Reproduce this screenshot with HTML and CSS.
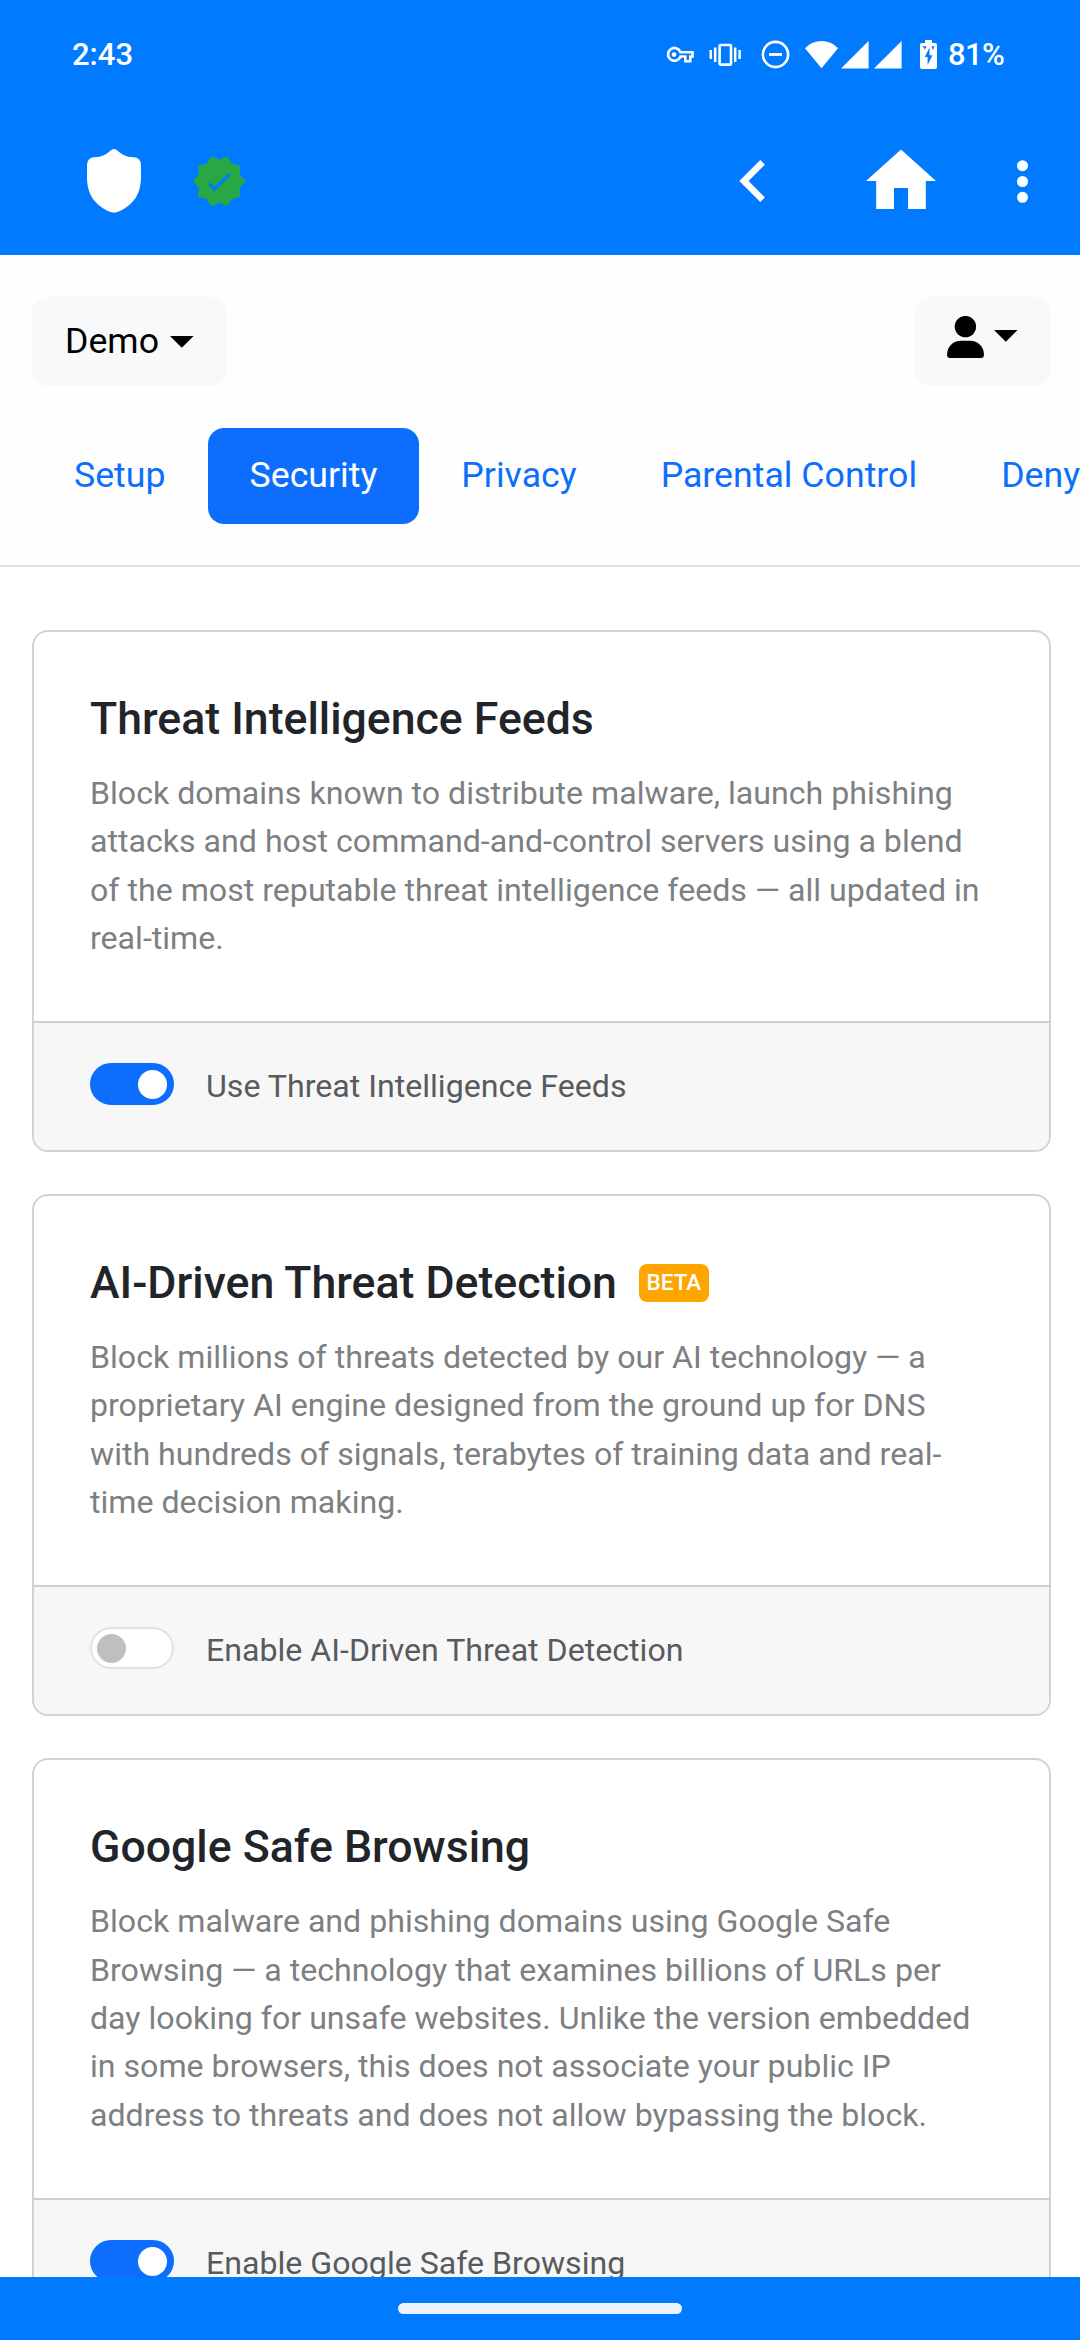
FILE: index.html
```html
<!DOCTYPE html>
<html lang="en">
<head>
<meta charset="utf-8">
<title>Security</title>
<link rel="stylesheet" href="styles.css">
</head>
<body>
<header class="appbar">
  <div class="status">
    <span class="clock">2:43</span>
    <div class="status-icons">
      <svg class="key" viewBox="666 46 29 18" width="29" height="18"><path d="M680.500 52.200h12v4.300h-2.200v4.800h-5v-4.800h-4.800A6.400 6.400 0 1 1 680.500 52.200z" fill="none" stroke="#fff" stroke-width="2.600"/><circle cx="674" cy="54.600" r="2.400" fill="#fff"/></svg>
      <svg class="vibrate" viewBox="709 43 33 24" width="33" height="24"><rect x="719.600" y="45" width="11.400" height="19.600" rx="1" fill="none" stroke="#fff" stroke-width="2.600"/><path d="M710.800 50v9M715.200 47.500v14.500M735.200 47.500v14.500M739.600 50v9" stroke="#fff" stroke-width="2.500"/></svg>
      <svg class="dnd" viewBox="761 40 29 29" width="29" height="29"><circle cx="775.500" cy="54.500" r="12.600" fill="none" stroke="#fff" stroke-width="2.600"/><path d="M769 54.500h13" stroke="#fff" stroke-width="2.800"/></svg>
      <svg class="wifi" viewBox="805 40 33 29" width="33" height="29"><path d="M821.500 68.200L805 48.200Q812 41 821.500 41T838 48.200z" fill="#fff"/></svg>
      <svg class="signal" viewBox="841 40 28 29" width="28" height="29"><path d="M868.600 41v27.500H841z" fill="#fff"/></svg>
      <svg class="signal second" viewBox="841 40 28 29" width="28" height="29"><path d="M868.600 41v27.500H841z" fill="#fff"/></svg>
      <svg class="battery" viewBox="920 40 17 29" width="17" height="29"><path d="M925 40h7v3h3.200q1.800 0 1.800 1.800v22.400q0 1.800-1.800 1.800h-13.400q-1.800 0-1.800-1.800v-22.400q0-1.800 1.800-1.800h3.200z" fill="#fff"/><path d="M929.500 47.500l-4.700 9.500h2.800v8l4.900-9.800h-3zM922.500 46.200h4.200l-1.800 3.200zM931.500 46.200h3l-1.600 4z" fill="#007aff"/></svg>
      <span class="percent">81%</span>
    </div>
  </div>
  <nav class="toolbar">
    <svg class="shield" viewBox="87 149 54 64" width="54" height="64"><path d="M111.500 149.800q2.500-1.600 5 0C122 155 126 157 133.500 157.300Q141 157.500 141 165.500V177C141 193 134.500 205 117.500 212Q114 213.200 110.500 212C93.500 205 87 193 87 177V165.500Q87 157.500 94.500 157.300C102 157 106 155 111.500 149.800z" fill="#fff"/></svg>
    <svg class="verified" viewBox="1 1 22 22" width="52.500" height="52.500"><path d="M23 12l-2.440-2.790.34-3.690-3.610-.82-1.890-3.200L12 2.960 8.600 1.500 6.710 4.690 3.100 5.500l.34 3.700L1 12l2.440 2.790-.34 3.700 3.610.82L8.600 22.500l3.400-1.470 3.400 1.460 1.890-3.190 3.610-.82-.34-3.690L23 12z" fill="#28a745"/><path d="M7.300 13.400l.85-.95L10 14.250l5.900-5.750.95.9L10 16.300z" fill="#007aff"/></svg>
    <svg class="back" viewBox="739 159 27 44" width="27" height="44"><path d="M760.300 160l4.600 4.700L748.600 181l16.300 16.300-4.600 4.700L739.300 181z" fill="#fff"/></svg>
    <svg class="home" viewBox="866 149 70 60" width="70" height="60"><path d="M901 149.500l35 31.500h-10.200v28H908v-21h-14v21h-17.800v-28H866z" fill="#fff"/></svg>
    <svg class="more" viewBox="1017 160 11 43" width="11" height="43"><g fill="#fff"><circle cx="1022.500" cy="165.700" r="5.500"/><circle cx="1022.500" cy="181.500" r="5.500"/><circle cx="1022.500" cy="197.300" r="5.500"/></g></svg>
  </nav>
</header>

<main class="content">
  <section class="top">
    <div class="menus">
      <button class="menu">Demo<svg class="caret" viewBox="0 0 23.600 12" width="23.600" height="12"><path d="M0 0h23.600L11.800 11.800z"/></svg></button>
      <button class="menu account"><svg class="person" viewBox="946 316 37 42" width="37" height="42"><circle cx="964.400" cy="326.600" r="10.700"/><path d="M960 340.700h9C977 340.700 982.900 347 982.900 354v1.600q0 2.400-2.400 2.400H948.500q-2.400 0-2.400-2.400V354C946.100 347 952 340.700 960 340.700z"/></svg><svg class="caret" viewBox="0 0 23.600 12" width="23.600" height="12"><path d="M0 0h23.600L11.800 11.800z"/></svg></button>
    </div>
    <div class="tabs">
      <a class="tab">Setup</a>
      <a class="tab active">Security</a>
      <a class="tab">Privacy</a>
      <a class="tab">Parental Control</a>
      <a class="tab">Denylist</a>
    </div>
  </section>
  <section class="cards">
    <article class="card">
      <div class="card-body">
        <h2 class="title"><span>Threat Intelligence Feeds</span></h2>
        <p class="text">Block domains known to distribute malware, launch phishing<br>attacks and host command-and-control servers using a blend<br>of the most reputable threat intelligence feeds — all updated in<br>real-time.</p>
      </div>
      <div class="card-footer"><span class="switch on"></span><span class="label">Use Threat Intelligence Feeds</span></div>
    </article>
    <article class="card">
      <div class="card-body">
        <h2 class="title"><span>AI-Driven Threat Detection</span><span class="badge">BETA</span></h2>
        <p class="text">Block millions of threats detected by our AI technology — a<br>proprietary AI engine designed from the ground up for DNS<br>with hundreds of signals, terabytes of training data and real-<br>time decision making.</p>
      </div>
      <div class="card-footer"><span class="switch"></span><span class="label">Enable AI-Driven Threat Detection</span></div>
    </article>
    <article class="card">
      <div class="card-body">
        <h2 class="title"><span>Google Safe Browsing</span></h2>
        <p class="text">Block malware and phishing domains using Google Safe<br>Browsing — a technology that examines billions of URLs per<br>day looking for unsafe websites. Unlike the version embedded<br>in some browsers, this does not associate your public IP<br>address to threats and does not allow bypassing the block.</p>
      </div>
      <div class="card-footer"><span class="switch on"></span><span class="label">Enable Google Safe Browsing</span></div>
    </article>
  </section>
</main>
<footer class="gesture"><span class="pill"></span></footer>
</body>
</html>
```
FILE: styles.css
```css
* { box-sizing: border-box; }
body {
  margin: 0;
  width: 1080px;
  height: 2340px;
  overflow: hidden;
  display: flex;
  flex-direction: column;
  background: #fff;
  font-family: Roboto, sans-serif;
  color: #212529;
}
svg { display: block; flex: none; }

.appbar { flex: none; height: 255px; background: #007aff; color: #fff; }
.status {
  height: 108px;
  padding: 1px 75px 0 72px;
  display: flex;
  justify-content: space-between;
  align-items: center;
  font: 500 31px/36px Roboto, sans-serif;
}
.status-icons { display: flex; align-items: center; }
.key { margin-right: 14px; }
.vibrate { margin-right: 19px; }
.dnd { margin-right: 15px; }
.wifi { margin-right: 3px; }
.signal { margin-right: 5px; }
.signal.second { margin-right: 18px; }
.battery { margin-right: 11px; }
.percent { width: 57px; letter-spacing: -.6px; white-space: nowrap; }
.toolbar {
  height: 146px;
  padding: 0 52px 0 87px;
  display: flex;
  align-items: center;
}
.verified { margin-left: 52px; }
.back { margin-left: auto; }
.home { margin-left: 100px; margin-bottom: 4px; }
.more { margin-left: 81px; }

.content { flex: 1; min-height: 0; overflow: hidden; }
.top {
  height: 312px;
  padding-top: 42px;
  border-bottom: 2px solid #dee2e6;
  background: #fefefe;
}
.menus { display: flex; justify-content: space-between; padding: 0 29px 0 32px; }
.menu {
  display: flex;
  align-items: center;
  height: 89px;
  padding: 0 33px 2px;
  border: 0;
  border-radius: 16px;
  background: #f8f9fa;
  color: #000;
  font: 400 35.700px/54px Roboto, sans-serif;
}
.menu .caret { margin: 2px 0 0 11px; }
.account { align-items: flex-start; padding-top: 19px; }
.account .caret { margin: 14px 0 0 10px; }
.tabs { display: flex; padding-left: 32px; margin-top: 42px; }
.tab {
  flex: none;
  height: 96px;
  padding: 0 42px;
  border-radius: 16px;
  color: #0d6efd;
  font-size: 35.700px;
  line-height: 95px;
}
.tab.active { background: #0d6efd; color: #fff; }

.cards {
  display: flex;
  flex-direction: column;
  gap: 42px;
  padding: 63px 29px 0 32px;
}
.card {
  border: 2px solid #d1d2d3;
  border-radius: 16px;
  overflow: hidden;
}
.card-body { padding: 55px 0 59px 56px; }
.title {
  display: flex;
  align-items: center;
  margin: 0;
  height: 64px;
  font-size: 44.620px;
  font-weight: 500;
  line-height: 64px;
}
.badge {
  margin-left: 22px;
  height: 38px;
  width: 70px;
  border-radius: 8px;
  background: #ffa500;
  color: #fff;
  text-align: center;
  font-size: 22.500px;
  line-height: 36px;
}
.text {
  margin: 18px 0 0;
  font-size: 32.130px;
  line-height: 48.300px;
  color: #7d7f82;
  white-space: nowrap;
}
.card-footer {
  display: flex;
  height: 129px;
  padding: 40px 0 0 56px;
  border-top: 2px solid #cfcfcf;
  background: #f7f7f7;
}
.switch {
  width: 84px;
  height: 42px;
  padding: 5px;
  border: 2px solid #dee2e6;
  border-radius: 21px;
  background: #fff;
  display: flex;
}
.switch::before {
  content: "";
  width: 29px;
  height: 29px;
  border-radius: 50%;
  background: #bfbfbf;
}
.switch.on { border-color: #0d6efd; background: #0d6efd; justify-content: flex-end; }
.switch.on::before { background: #fff; }
.label { margin-left: 32px; font-size: 32.130px; line-height: 46px; color: #585b5e; }

.gesture {
  flex: none;
  height: 63px;
  padding-top: 26px;
  background: #007aff;
}
.pill {
  display: block;
  width: 284px;
  height: 11px;
  margin: 0 auto;
  border-radius: 5.500px;
  background: #e9f4ff;
}
```
